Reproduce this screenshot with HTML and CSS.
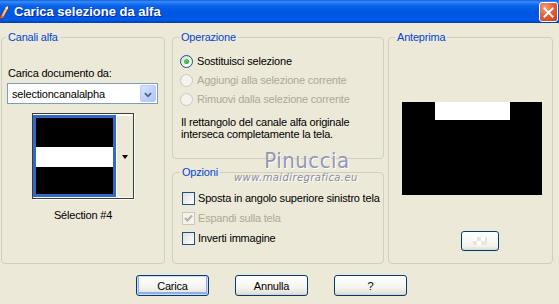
FILE: index.html
```html
<!DOCTYPE html>
<html lang="it">
<head>
<meta charset="utf-8">
<title>Carica selezione da alfa</title>
<link rel="stylesheet" href="styles.css">
</head>
<body>
<div class="titlebar">
  <svg class="app-icon" viewBox="0 0 9 14" width="9" height="14">
    <path d="M0 13 L5 3 L8 1 L8 4 L3 13 Z" fill="#f4c89a" stroke="#7a3b1a" stroke-width="0.8"/>
    <path d="M5 3 L8 1 L8 4 Z" fill="#ffffff"/>
    <path d="M0 13 L2 9 L3 13 Z" fill="#d05a2a"/>
  </svg>
  <span class="title">Carica selezione da alfa</span>
  <div class="close">
    <svg viewBox="0 0 19 20" width="19" height="20"><path d="M5 5 L14 14 M14 5 L5 14" stroke="#fff" stroke-width="2.2" stroke-linecap="square"/></svg>
  </div>
</div>

<div class="groups">
  <fieldset class="group g-left">
    <legend class="lg-left">Canali alfa</legend>
    <div class="lbl">Carica documento da:</div>
    <div class="select">
      <span class="sel-text">selectioncanalalpha</span>
      <span class="drop"><svg viewBox="0 0 16 17" width="16" height="17"><path d="M4.5 7 L8 10.5 L11.5 7" fill="none" stroke="#4D6185" stroke-width="2"/></svg></span>
    </div>
    <div class="thumb">
      <div class="thumb-img"><div class="thumb-band"></div></div>
      <div class="thumb-btn"><span class="tri"></span></div>
    </div>
    <div class="caption">Sélection #4</div>
  </fieldset>

  <div class="col-mid">
    <fieldset class="group g-op">
      <legend class="lg-mid">Operazione</legend>
      <div class="radio-row first"><span class="radio checked"></span><span>Sostituisci selezione</span></div>
      <div class="radio-row disabled"><span class="radio"></span><span>Aggiungi alla selezione corrente</span></div>
      <div class="radio-row disabled"><span class="radio"></span><span>Rimuovi dalla selezione corrente</span></div>
      <p class="desc">Il rettangolo del canale alfa originale<br>interseca completamente la tela.</p>
    </fieldset>
    <fieldset class="group g-opt">
      <legend class="lg-opt">Opzioni</legend>
      <div class="check-row first"><span class="check"></span><span>Sposta in angolo superiore sinistro tela</span></div>
      <div class="check-row disabled"><span class="check checked"><svg viewBox="0 0 11 11" width="11" height="11"><path d="M2 5 L4.5 7.5 L9 2.5" fill="none" stroke="#b5b2a3" stroke-width="2"/></svg></span><span>Espandi sulla tela</span></div>
      <div class="check-row"><span class="check"></span><span>Inverti immagine</span></div>
    </fieldset>
  </div>

  <fieldset class="group g-prev">
    <legend class="lg-prev">Anteprima</legend>
    <div class="preview"><div class="preview-band"></div></div>
    <div class="mini-btn"><span class="mini-dots"></span></div>
  </fieldset>
</div>

<div class="buttons">
  <button class="btn default">Carica</button>
  <button class="btn">Annulla</button>
  <button class="btn">?</button>
</div>

<div class="watermark">
  <div class="wm-name">Pinuccia</div>
  <div class="wm-url">www.maidiregrafica.eu</div>
</div>
</body>
</html>
```

FILE: styles.css
```css
* { box-sizing: border-box; }
html, body { margin: 0; padding: 0; }
body {
  width: 559px;
  height: 304px;
  overflow: hidden;
  position: relative;
  background: #ECE9D8;
  font-family: "Liberation Sans", Arial, sans-serif;
  font-size: 11px;
  letter-spacing: -0.2px;
  color: #000;
}

/* Title bar */
.titlebar {
  height: 23px;
  display: flex;
  align-items: center;
  color: #fff;
  background: linear-gradient(to bottom, #0A5FE6 0%, #3D8DF5 8%, #1C74F0 16%, #0660E8 28%, #0057E2 50%, #0056E4 70%, #005AEB 84%, #0050D6 92%, #003FAF 100%);
}
.app-icon { flex: none; margin-top: 1px; }
.title {
  margin-left: 5px;
  font-weight: bold;
  font-size: 13px;
  letter-spacing: 0;
  text-shadow: 1px 1px 0 #0B2A8A;
}
.close {
  margin-left: auto;
  margin-right: 1px;
  width: 19px;
  height: 20px;
  border: 1px solid #fff;
  border-radius: 3px;
  background: radial-gradient(circle at 30% 25%, #F2A07E 0%, #E2623A 45%, #C7401C 100%);
  display: flex;
}

/* Groups */
.groups {
  display: flex;
  margin-top: 8px;
  padding-left: 1px;
}
fieldset.group {
  margin: 0;
  padding: 0;
  min-width: 0;
  border: 1px solid #D0D0BF;
  border-radius: 4px;
}
legend {
  color: #0046D5;
  padding: 0 2px;
  line-height: 13px;
}
.lg-left { margin-left: 4px; }
.lg-mid { margin-left: 6px; }
.lg-opt { margin-left: 7px; }
.lg-prev { margin-left: 6px; }

.g-left { width: 164px; height: 233px; }
.col-mid {
  width: 212px;
  margin: 0 4px 0 7px;
  display: flex;
  flex-direction: column;
  gap: 7px;
}
.g-op { height: 128px; }
.g-opt { height: 98px; }
.g-prev { width: 165px; height: 233px; }

/* Left group */
.lbl { margin: 23px 0 0 6px; line-height: 13px; }
.select {
  margin: 3px 0 0 5px;
  width: 151px;
  height: 21px;
  border: 1px solid #7F9DB9;
  background: #fff;
  display: flex;
  align-items: center;
  padding: 0 1px 0 4px;
}
.sel-text { flex: 1; }
.drop {
  width: 16px;
  height: 17px;
  border-radius: 2px;
  background: linear-gradient(135deg, #D8E3FC 0%, #C1D3FB 50%, #AFC5F5 100%);
  border: 1px solid #B8CCF6;
  display: flex;
}
.thumb {
  margin: 9px 0 0 30px;
  width: 102px;
  height: 86px;
  border: 1px solid #3C3C3C;
  box-shadow: 1px 1px 0 #fff;
  background: #fff;
  padding: 1px 0 1px 0;
  display: flex;
}
.thumb-img {
  width: 83px;
  height: 82px;
  border: 3px solid #316AC5;
  background: #000;
  padding-top: 29px;
}
.thumb-band { height: 20px; background: #fff; }
.thumb-btn {
  flex: 1;
  background: #ECE9D8;
  border-left: 1px solid #fff;
  border-top: 1px solid #fff;
  display: flex;
  align-items: center;
  justify-content: center;
}
.tri {
  width: 0;
  height: 0;
  border-left: 3.5px solid transparent;
  border-right: 3.5px solid transparent;
  border-top: 4px solid #000;
}
.caption {
  margin-top: 10px;
  text-align: center;
  line-height: 13px;
}

/* Radios */
.radio-row, .check-row {
  display: flex;
  align-items: center;
  height: 13px;
  line-height: 13px;
}
.radio-row { margin: 6px 0 0 7px; gap: 4px; }
.radio-row.first { margin-top: 11px; }
.radio {
  width: 13px;
  height: 13px;
  border-radius: 50%;
  border: 1px solid #1C5180;
  background: linear-gradient(135deg, #DCDCD7 0%, #FFFFFF 100%);
  display: flex;
  align-items: center;
  justify-content: center;
}
.radio.checked::after {
  content: "";
  width: 5px;
  height: 5px;
  border-radius: 50%;
  background: radial-gradient(circle at 35% 35%, #55D155, #21A121);
}
.disabled { color: #ACA899; }
.disabled .radio, .disabled .check {
  border-color: #CAC8BB;
  background: #F4F3EE;
}
.desc {
  margin: 10px 0 0 8px;
  line-height: 12px;
}

/* Checkboxes */
.check-row { margin: 7px 0 0 9px; gap: 3px; }
.check-row.first { margin-top: 13px; }
.check {
  width: 13px;
  height: 13px;
  border: 1px solid #1C5180;
  background: linear-gradient(135deg, #DCDCD7 0%, #FFFFFF 100%);
  display: flex;
}

/* Preview */
.preview {
  margin: 58px 0 0 13px;
  width: 140px;
  height: 93px;
  background: #000;
  padding-left: 33px;
}
.preview-band { width: 75px; height: 18px; background: #fff; }
.mini-btn {
  margin: 36px 0 0 72px;
  width: 38px;
  height: 20px;
  border: 1px solid #003C74;
  border-radius: 3px;
  background: linear-gradient(#FFFFFF, #F2F2EE 80%, #DCD8CC);
  display: flex;
  align-items: center;
  justify-content: center;
}
.mini-dots {
  width: 14px;
  height: 8px;
  background:
    linear-gradient(#fff, #fff) 0 0 / 4px 4px no-repeat,
    linear-gradient(#fff, #fff) 8px 0 / 4px 4px no-repeat,
    linear-gradient(#fff, #fff) 4px 4px / 4px 4px no-repeat,
    #E8E6DE;
}

/* Buttons */
.buttons {
  display: flex;
  gap: 26px;
  margin-top: 11px;
  padding-left: 136px;
}
.btn {
  width: 73px;
  height: 21px;
  padding: 0;
  border: 1px solid #003C74;
  border-radius: 3px;
  background: linear-gradient(#FFFFFF 0%, #F4F4F0 60%, #E6E3D9 90%, #D6D0C5 100%);
  font-family: "Liberation Sans", Arial, sans-serif;
  font-size: 11px;
  letter-spacing: -0.2px;
  color: #000;
}
.btn.default {
  box-shadow: inset 0 0 0 1px #CEDCF8, inset 0 -1px 0 2px #8FAEEE;
}

/* Watermark overlay */
.watermark {
  position: absolute;
  left: 234px;
  top: 149px;
  width: 122px;
  color: #9696B4;
  pointer-events: none;
}
.wm-name {
  text-align: center;
  padding-left: 24px;
  font-family: "DejaVu Sans Condensed", "DejaVu Sans", sans-serif;
  font-size: 22px;
  line-height: 23px;
  letter-spacing: 0.5px;
  text-shadow: 1px 1px 0 #fff;
}
.wm-url {
  text-align: center;
  font-family: "DejaVu Sans", sans-serif;
  font-style: italic;
  font-size: 10px;
  line-height: 12px;
  letter-spacing: 0.4px;
  color: #8C8CA0;
  text-shadow: 1px 1px 0 #fff;
}
```
